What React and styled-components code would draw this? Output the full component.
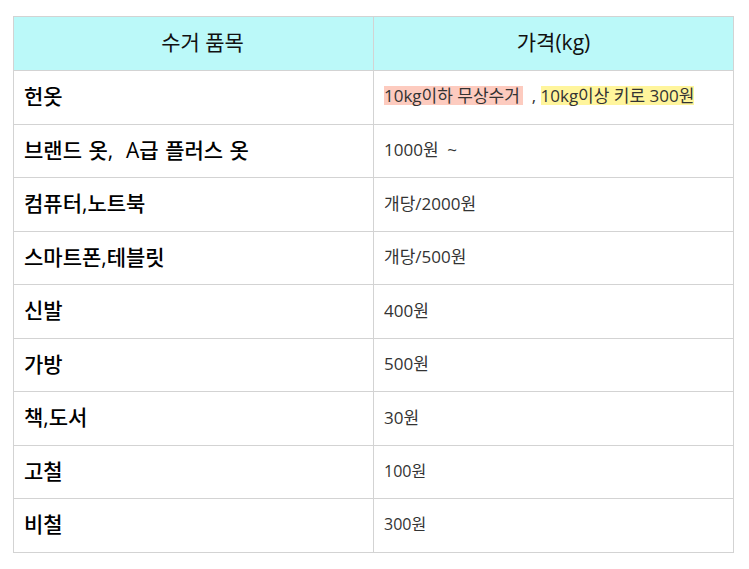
import React from "react";
import styled, { createGlobalStyle } from "styled-components";

const Global = createGlobalStyle`
  html, body { margin: 0; padding: 0; background: #ffffff; }
  body { font-family: "Open Sans", "Noto Sans CJK KR", sans-serif; }
`;

const Page = styled.div`
  padding: 16px 0 0 13px;
`;

const Table = styled.table`
  width: 721px;
  border-collapse: collapse;
  table-layout: fixed;
  font-family: "Open Sans", "Noto Sans CJK KR", sans-serif;
`;

const HeadRow = styled.tr`
  height: 54px;
`;

const HeadCell = styled.th`
  background: #bbf9f9;
  border: 1px solid #d3d3d3;
  padding: 0 0 5px ${(p) => p.$indent || 0}px;
  font-size: 21px;
  font-weight: 400;
  color: #111;
  text-align: center;
  vertical-align: middle;
`;

const Row = styled.tr`
  height: ${(p) => p.$h}px;
`;

const ItemCell = styled.td`
  border: 1px solid #d3d3d3;
  padding: 0 10px 5px;
  font-size: 21px;
  font-weight: 500;
  word-spacing: 1px;
  color: #000;
  vertical-align: middle;
  white-space: pre;
`;

const PriceCell = styled.td`
  border: 1px solid #d3d3d3;
  padding: 0 10px 5px;
  font-size: ${(p) => p.$size || 17}px;
  color: #333;
  vertical-align: middle;
  white-space: pre;
`;

const Mark = styled.span`
  display: inline-block;
  line-height: 19px;
  padding-right: ${(p) => p.$pr || 0}px;
  background: ${(p) => p.$bg};
`;

const rows = [
  ["브랜드 옷,  A급 플러스 옷", "1000원  ~", 17],
  ["컴퓨터,노트북", "개당/2000원", 17],
  ["스마트폰,테블릿", "개당/500원", 17],
  ["신발", "400원", 17],
  ["가방", "500원", 17],
  ["책,도서", "30원", 17],
  ["고철", "100원", 16],
  ["비철", "300원", 16],
];

export default function App() {
  return (
    <Page>
      <Global />
      <Table>
        <thead>
          <HeadRow>
            <HeadCell $indent={18}>수거 품목</HeadCell>
            <HeadCell>가격(kg)</HeadCell>
          </HeadRow>
        </thead>
        <tbody>
          <Row $h={54}>
            <ItemCell>헌옷</ItemCell>
            <PriceCell>
              <Mark $bg="#fdcbbf" $pr={3}>10kg이하 무상수거</Mark>{"  , "}<Mark $bg="#fff59c">10kg이상 키로 300원</Mark>
            </PriceCell>
          </Row>
          {rows.map(([item, price, size], i) => (
            <Row key={item} $h={i % 2 === 0 ? 53 : 54}>
              <ItemCell>{item}</ItemCell>
              <PriceCell $size={size}>{price}</PriceCell>
            </Row>
          ))}
        </tbody>
      </Table>
    </Page>
  );
}
